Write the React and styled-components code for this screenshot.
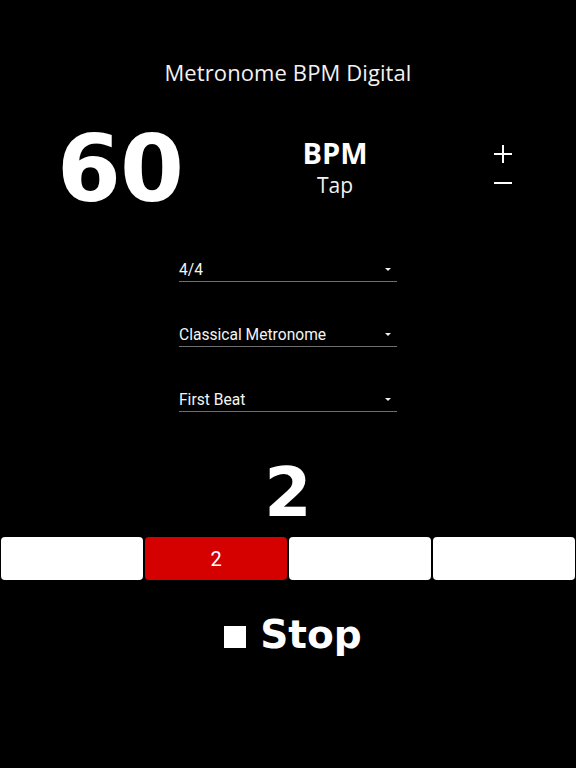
import { useState } from "react";
import styled, { createGlobalStyle } from "styled-components";

const GlobalStyle = createGlobalStyle`
  html, body {
    margin: 0;
    padding: 0;
    background: #000;
  }
  body {
    font-family: "Open Sans", "Liberation Sans", sans-serif;
    color: #fff;
  }
`;

const BEATS = [1, 2, 3, 4];
const SELECTS = ["4/4", "Classical Metronome", "First Beat"];

export default function App() {
  const [bpm, setBpm] = useState(60);
  const [current] = useState(2);

  return (
    <>
      <GlobalStyle />
      <Page>
        <Title>Metronome BPM Digital</Title>
        <Header>
          <Tempo>{bpm}</Tempo>
          <TapColumn>
            <BpmLabel>BPM</BpmLabel>
            <TapLabel>Tap</TapLabel>
          </TapColumn>
          <StepColumn>
            <StepButton onClick={() => setBpm((b) => b + 1)} aria-label="plus">
              <svg width="18" height="18" viewBox="0 0 18 18">
                <path d="M0 9H18M9 0V18" stroke="#fff" strokeWidth="2" />
              </svg>
            </StepButton>
            <StepButton onClick={() => setBpm((b) => b - 1)} aria-label="minus">
              <svg width="18" height="18" viewBox="0 0 18 18">
                <path d="M0 9H18" stroke="#fff" strokeWidth="2" />
              </svg>
            </StepButton>
          </StepColumn>
        </Header>
        <Selects>
          {SELECTS.map((label) => (
            <SelectRow key={label}>
              <SelectText>{label}</SelectText>
              <Arrow />
            </SelectRow>
          ))}
        </Selects>
        <BigBeat>{current}</BigBeat>
        <Beats>
          {BEATS.map((b) => (
            <Beat key={b} $active={b === current}>
              {b === current ? b : ""}
            </Beat>
          ))}
        </Beats>
        <StopButton>
          <StopSquare />
          <StopText>Stop</StopText>
        </StopButton>
      </Page>
    </>
  );
}

const Page = styled.div`
  width: 576px;
  height: 768px;
  background: #000;
  display: flex;
  flex-direction: column;
  align-items: stretch;
`;

const Title = styled.div`
  margin-top: 60px;
  height: 24px;
  line-height: 24px;
  font-size: 22px;
  letter-spacing: 0.1px;
  text-align: center;
  color: #f2f2f2;
`;

const Header = styled.div`
  margin-top: 40px;
  display: grid;
  grid-template-columns: 240px 190px 1fr;
  align-items: start;
  height: 92px;
`;

const Tempo = styled.div`
  font-family: "DejaVu Sans", sans-serif;
  font-weight: 700;
  font-size: 92px;
  line-height: 1;
  text-align: center;
  letter-spacing: -1px;
`;

const TapColumn = styled.div`
  margin-top: 14px;
  display: flex;
  flex-direction: column;
  align-items: center;
  gap: 5px;
`;

const BpmLabel = styled.div`
  font-weight: 700;
  font-size: 29px;
  line-height: 30px;
`;

const TapLabel = styled.div`
  font-size: 21px;
  line-height: 24px;
  color: #f2f2f2;
`;

const StepColumn = styled.div`
  margin-top: 21px;
  display: flex;
  flex-direction: column;
  align-items: center;
  gap: 11px;
`;

const StepButton = styled.button`
  width: 18px;
  height: 18px;
  padding: 0;
  border: none;
  background: none;
  display: block;
  cursor: pointer;
  svg {
    display: block;
  }
`;

const Selects = styled.div`
  margin-top: 33px;
  display: flex;
  flex-direction: column;
  align-items: center;
  gap: 32px;
`;

const SelectRow = styled.div`
  box-sizing: border-box;
  width: 218px;
  height: 33px;
  padding-bottom: 2px;
  border-bottom: 1px solid #6e6e6e;
  display: flex;
  align-items: flex-end;
  justify-content: space-between;
`;

const SelectText = styled.span`
  font-family: Roboto, "Open Sans", sans-serif;
  font-size: 15.6px;
  line-height: 18px;
  color: #f4f4f4;
`;

const Arrow = styled.span`
  width: 0;
  height: 0;
  margin: 0 6px 8px 0;
  border-left: 3px solid transparent;
  border-right: 3px solid transparent;
  border-top: 3px solid #eee;
`;

const BigBeat = styled.div`
  margin-top: 47px;
  font-family: "DejaVu Sans", sans-serif;
  font-weight: 700;
  font-size: 68px;
  line-height: 1;
  text-align: center;
`;

const Beats = styled.div`
  margin-top: 10px;
  padding: 0 1px;
  display: grid;
  grid-template-columns: repeat(4, 1fr);
  gap: 2px;
`;

const Beat = styled.div`
  height: 43px;
  border-radius: 4px;
  background: ${(p) => (p.$active ? "#d50000" : "#fff")};
  color: #fff;
  font-family: Roboto, sans-serif;
  font-size: 20px;
  display: flex;
  align-items: center;
  justify-content: center;
`;

const StopButton = styled.div`
  margin-top: 35px;
  display: flex;
  justify-content: center;
  align-items: flex-start;
  gap: 14px;
  padding-left: 10px;
`;

const StopSquare = styled.span`
  width: 22px;
  height: 22px;
  margin-top: 11px;
  background: #fff;
`;

const StopText = styled.span`
  font-family: "DejaVu Sans", sans-serif;
  font-weight: 700;
  font-size: 39px;
  line-height: 40px;
`;
